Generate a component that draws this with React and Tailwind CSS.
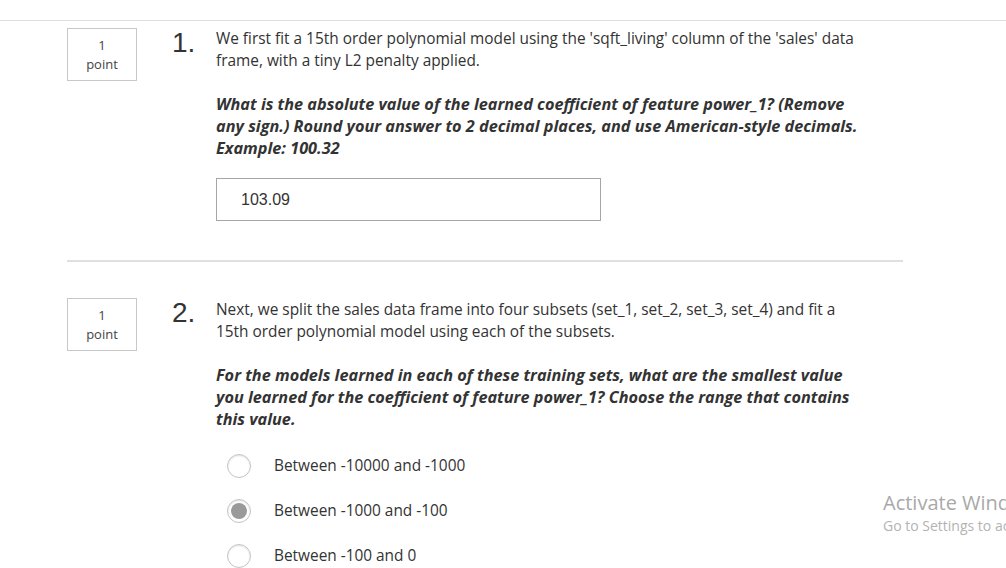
import React, { useState } from 'react';

const questions = [
  {
    num: '1',
    text: "We first fit a 15th order polynomial model using the 'sqft_living' column of the 'sales' data frame, with a tiny L2 penalty applied.",
    prompt: 'What is the absolute value of the learned coefficient of feature power_1? (Remove any sign.) Round your answer to 2 decimal places, and use American-style decimals. Example: 100.32',
    kind: 'input',
    answer: '103.09',
  },
  {
    num: '2',
    text: 'Next, we split the sales data frame into four subsets (set_1, set_2, set_3, set_4) and fit a 15th order polynomial model using each of the subsets.',
    prompt: 'For the models learned in each of these training sets, what are the smallest value you learned for the coefficient of feature power_1? Choose the range that contains this value.',
    kind: 'radio',
    options: ['Between -10000 and -1000', 'Between -1000 and -100', 'Between -100 and 0'],
    selected: 1,
  },
];

const Radio = ({ checked, label, onClick }) => (
  <button onClick={onClick} className="flex items-center h-[45px] text-left">
    <span className="w-[24px] h-[24px] rounded-full border border-[#c4c4c4] bg-white shadow-[inset_0_1px_2px_rgba(0,0,0,0.12)] flex items-center justify-center">
      {checked && <span className="w-[16px] h-[16px] rounded-full bg-[#9a9a9a]" />}
    </span>
    <span className="ml-[23px] text-[15.4px] text-[#333]">{label}</span>
  </button>
);

const Question = ({ q, textTop = 0 }) => {
  const [value, setValue] = useState(q.answer || '');
  const [sel, setSel] = useState(q.selected ?? -1);

  return (
    <div className="flex pl-[67px]">
      {/* Points */}
      <div className="w-[70px] h-[53px] border border-[#c8c8c8] flex flex-col items-center justify-center text-[13px] leading-[19px] text-[#444] shrink-0">
        <span>1</span>
        <span>point</span>
      </div>

      <div className="w-[44px] ml-[35px] shrink-0 text-[28px] leading-[30px] text-[#333] font-['Liberation_Sans',Arial,sans-serif]">
        {q.num}.
      </div>

      <div className={textTop ? 'w-[646px] pt-[1px]' : 'w-[646px]'}>
        <p className="text-[15.4px] leading-[22px] text-[#333]">{q.text}</p>
        <p className="mt-[21px] text-[16.25px] leading-[22px] text-[#333] font-bold italic">{q.prompt}</p>

        {q.kind === 'input' && (
          <input
            value={value}
            onChange={(e) => setValue(e.target.value)}
            className="mt-[19px] w-[385px] h-[43px] border border-[#a6a6a6] pl-[24px] text-[16px] text-[#333] font-['Liberation_Sans',Arial,sans-serif] outline-none"
          />
        )}

        {q.kind === 'radio' && (
          <div className="mt-[13px] pl-[11px] flex flex-col">
            {q.options.map((opt, i) => (
              <Radio key={opt} label={opt} checked={sel === i} onClick={() => setSel(i)} />
            ))}
          </div>
        )}
      </div>
    </div>
  );
};

export default function App() {
  return (
    <div className="relative w-[1006px] h-[568px] overflow-hidden bg-white font-['Open_Sans',sans-serif]">
      <div className="h-[21px] border-b border-[#dedede]" />

      <div className="pt-[7px]">
        <Question q={questions[0]} />
      </div>

      <div className="mt-[39px] ml-[67px] w-[836px] h-[2px] bg-[#e0e0e0]" />

      <div className="pt-[36px]">
        <Question q={questions[1]} textTop={1} />
      </div>

      {/* Windows watermark */}
      <div className="absolute left-[883px] top-[489px] whitespace-nowrap pointer-events-none">
        <div className="text-[20px] leading-[27px] text-[#a9a9a9]">Activate Windows</div>
        <div className="text-[14px] leading-[20px] text-[#b3b3b3]">Go to Settings to activate Windows.</div>
      </div>
    </div>
  );
}
